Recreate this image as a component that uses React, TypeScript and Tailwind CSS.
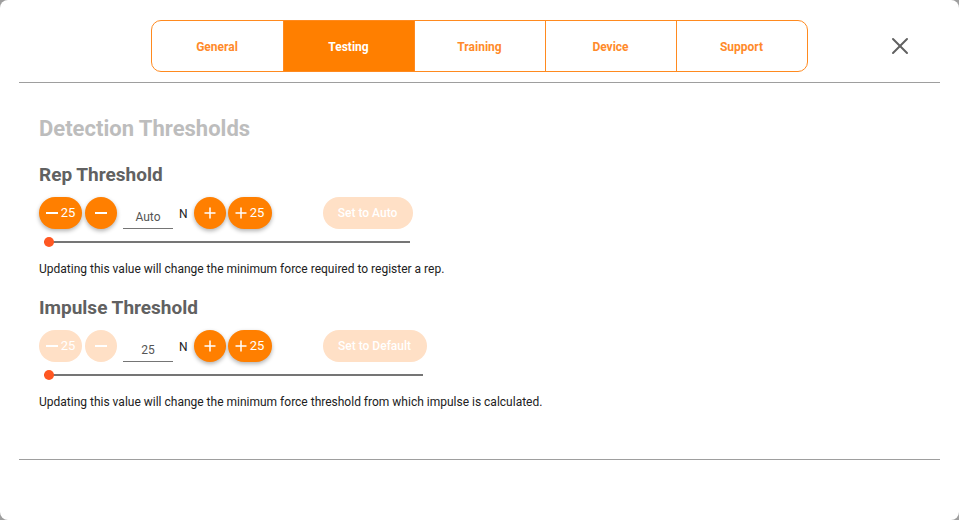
import { X } from "lucide-react";

const tabs = ["General", "Testing", "Training", "Device", "Support"];

function Minus() {
    return <span className="inline-block w-[12px] h-[1.5px] bg-current" />;
}

function Plus() {
    return (
        <svg width="12" height="12" viewBox="0 0 12 12" className="shrink-0">
            <path d="M6 0.5v11M0.5 6h11" stroke="currentColor" strokeWidth="1.5" />
        </svg>
    );
}

function RoundBtn({ children, disabled, wide }: { children: React.ReactNode; disabled?: boolean; wide?: string }) {
    return (
        <button
            className={
                "h-[32px] rounded-full flex items-center justify-center gap-[3px] text-white text-[13px] " +
                (wide ? wide + " " : "w-[32px] ") +
                (disabled ? "bg-[#ffe0c6]" : "bg-[#ff7f00] shadow-[0_2px_4px_rgba(0,0,0,0.3)]")
            }
        >
            {children}
        </button>
    );
}

function Threshold({ title, value, setLabel, setW, lowDisabled, trackW, desc }: {
    title: string; value: string; setLabel: string; setW: string; lowDisabled?: boolean; trackW: string; desc: string;
}) {
    return (
        <div>
            <h3 className="text-[19px] leading-[26px] font-bold text-[#616161]">{title}</h3>
            <div className="flex items-center mt-[9px] h-[32px]">
                <RoundBtn disabled={lowDisabled} wide="w-[43px]"><Minus /><span>25</span></RoundBtn>
                <div className="ml-[3px]"><RoundBtn disabled={lowDisabled}><Minus /></RoundBtn></div>
                <div className="ml-[6px] w-[50px] h-[32px] flex items-end">
                    <div className="w-full border-b border-[#757575] text-center text-[12px] leading-[16px] pb-[3px] text-[#555]">{value}</div>
                </div>
                <span className="ml-[6px] text-[12px] text-[#222] self-start mt-[8px]">N</span>
                <div className="ml-[6px]"><RoundBtn><Plus /></RoundBtn></div>
                <div className="ml-[2px]"><RoundBtn wide="w-[44px]"><Plus /><span>25</span></RoundBtn></div>
                <button className={"ml-[51px] h-[32px] rounded-full bg-[#ffe0c6] text-white text-[12px] font-medium " + setW}>{setLabel}</button>
            </div>
            <div className={"relative h-[10px] mt-[8px] ml-[5px] flex items-center " + trackW}>
                <div className="w-full h-[2px] bg-[#757575]" />
                <div className="absolute left-0 w-[10px] h-[10px] rounded-full bg-[#ff5722]" />
            </div>
            <p className="mt-[14px] text-[12px] leading-[16px] text-[#212121]">{desc}</p>
        </div>
    );
}

export default function App() {
    return (
        <div className="w-[959px] h-[520px] bg-[#9e9e9e]" style={{ fontFamily: "Roboto, sans-serif" }}>
            <div className="w-full h-full bg-white rounded-[8px] flex flex-col">
                {/* Header */}
                <div className="grid grid-cols-[1fr_auto_1fr] items-center pt-[20px] pb-[10px]">
                    <div />
                    <div className="flex h-[52px] -ml-[1px] border border-[#ff8a1f] rounded-[10px] overflow-hidden">
                        {tabs.map((t, i) => (
                            <div
                                key={t}
                                className={
                                    "w-[131px] flex items-center justify-center pt-[1px] text-[12px] font-bold " +
                                    (i > 0 ? "border-l border-[#ff8a1f] " : "") +
                                    (t === "Testing" ? "bg-[#ff7f00] text-white" : "text-[#ff8a2a]")
                                }
                            >
                                {t}
                            </div>
                        ))}
                    </div>
                    <div className="flex justify-end pr-[45px]">
                        <X className="w-[28px] h-[28px] text-[#616161]" strokeWidth={1.7} />
                    </div>
                </div>
                <div className="mx-[19px] border-t border-[#9e9e9e]" />

                {/* Content */}
                <div className="px-[39px] pt-[32px]">
                    <h2 className="text-[22px] leading-[28px] font-bold text-[#bdbdbd]">Detection Thresholds</h2>
                    <div className="mt-[19px]">
                        <Threshold
                            title="Rep Threshold"
                            value="Auto"
                            setLabel="Set to Auto"
                            setW="w-[90px]"
                            trackW="w-[366px]"
                            desc="Updating this value will change the minimum force required to register a rep."
                        />
                    </div>
                    <div className="mt-[18px]">
                        <Threshold
                            title="Impulse Threshold"
                            value="25"
                            setLabel="Set to Default"
                            setW="w-[104px]"
                            lowDisabled
                            trackW="w-[379px]"
                            desc="Updating this value will change the minimum force threshold from which impulse is calculated."
                        />
                    </div>
                </div>
                <div className="mx-[19px] mt-[49px] border-t border-[#9e9e9e]" />
            </div>
        </div>
    );
}
